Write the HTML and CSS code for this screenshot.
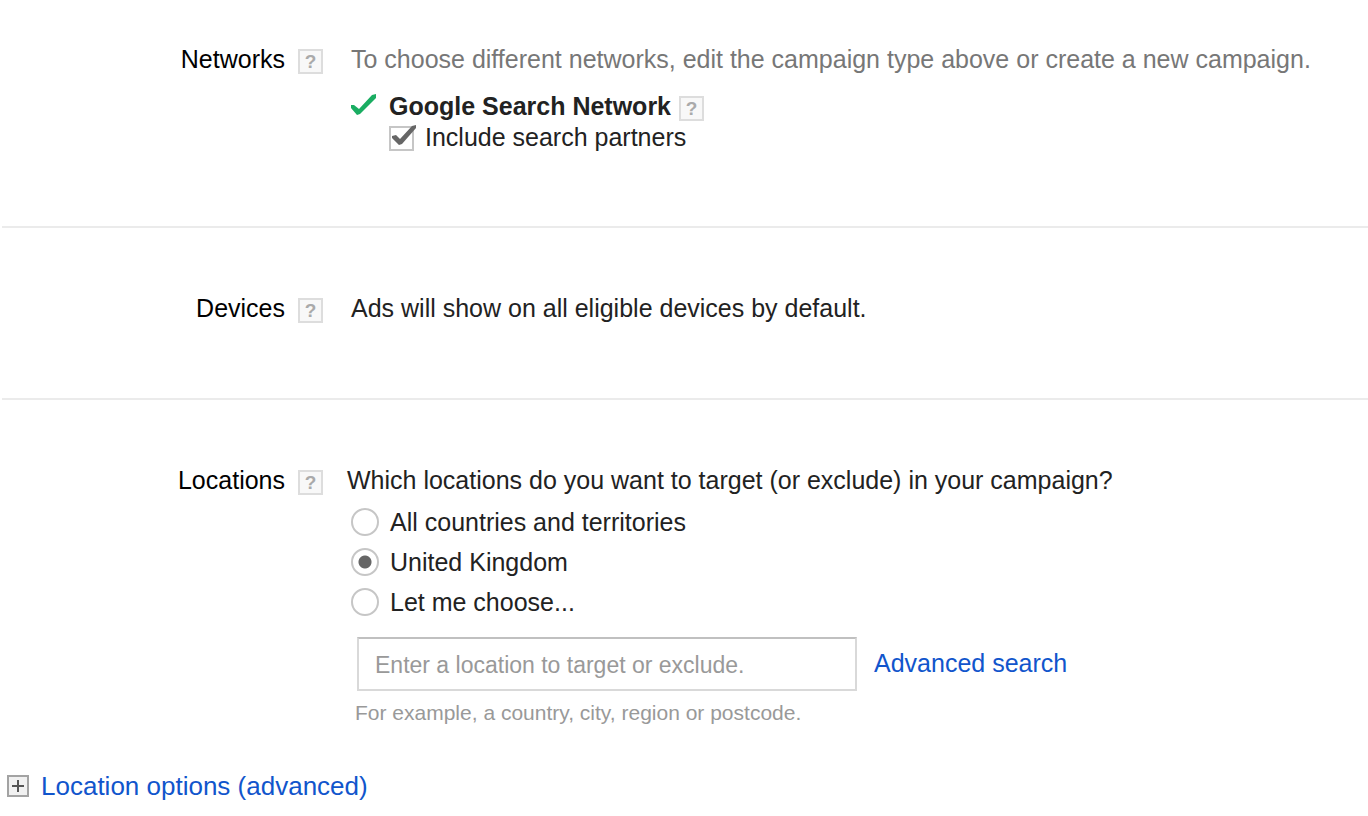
FILE: index.html
```html
<!DOCTYPE html>
<html lang="en">
<head>
  <meta charset="UTF-8" />
  <meta name="viewport" content="width=device-width, initial-scale=1.0" />
  <title>Campaign settings</title>
  <link rel="stylesheet" href="styles.css">
</head>
<body>
  <form class="settings">

    <section class="setting">
      <div class="setting-name">
        <h2>Networks</h2>
        <button type="button" class="help" aria-label="Help with networks">?</button>
      </div>
      <div class="setting-body">
        <p class="note">To choose different networks, edit the campaign type above or create a new campaign.</p>
        <div class="network">
          <svg class="tick" viewBox="0 0 26 22" aria-hidden="true">
            <path d="M0 14 L0 11 L3 11 L8 15 L21 1 L25 0 L25 4 L9 20 L6 21 Z" fill="#1aad62" />
          </svg>
          <strong>Google Search Network</strong>
          <button type="button" class="help" aria-label="Help with Google Search Network">?</button>
        </div>
        <div class="partners">
          <span class="check">
            <input type="checkbox" id="partners" checked>
            <svg viewBox="0 0 28 28" aria-hidden="true">
              <path d="M3 14 L3 12 L7 11 L11 15 L23 2 L27 1 L27 4 L13 20 L10 21 Z" fill="#666" />
            </svg>
          </span>
          <label for="partners">Include search partners</label>
        </div>
      </div>
    </section>

    <section class="setting">
      <div class="setting-name">
        <h2>Devices</h2>
        <button type="button" class="help" aria-label="Help with devices">?</button>
      </div>
      <div class="setting-body">
        <p>Ads will show on all eligible devices by default.</p>
      </div>
    </section>

    <section class="setting locations">
      <div class="setting-name">
        <h2>Locations</h2>
        <button type="button" class="help" aria-label="Help with locations">?</button>
      </div>
      <fieldset class="setting-body">
        <legend>Which locations do you want to target (or exclude) in your campaign?</legend>
        <div class="choices">
          <div class="choice">
            <input type="radio" name="location" id="all">
            <label for="all">All countries and territories</label>
          </div>
          <div class="choice">
            <input type="radio" name="location" id="uk" checked>
            <label for="uk">United Kingdom</label>
          </div>
          <div class="choice">
            <input type="radio" name="location" id="choose">
            <label for="choose">Let me choose...</label>
          </div>
        </div>
        <div class="search">
          <input type="text" aria-label="Location" aria-describedby="hint" placeholder="Enter a location to target or exclude.">
          <a href="#">Advanced search</a>
        </div>
        <p class="hint" id="hint">For example, a country, city, region or postcode.</p>
      </fieldset>
    </section>

    <a href="#" class="more">
      <svg viewBox="0 0 22 22" aria-hidden="true">
        <rect x="1" y="1" width="20" height="20" fill="#f1f1f1" stroke="#a3a3a3" stroke-width="2" />
        <path d="M11 5 V17 M5 11 H17" stroke="#555" stroke-width="2" />
      </svg>
      Location options (advanced)
    </a>

  </form>
</body>
</html>
```

FILE: styles.css
```css
* {
  box-sizing: border-box;
}

body {
  margin: 0;
  background-color: #fff;
  color: #222;
  font-family: "Liberation Sans", Arial, Helvetica, sans-serif;
  font-size: 25px;
  line-height: 30px;
}

h2, p {
  margin: 0;
  font-size: 25px;
  font-weight: normal;
}

a {
  color: #15c;
  text-decoration: none;
}

a:hover {
  text-decoration: underline;
}

.settings {
  padding-left: 2px;
}

.setting {
  display: grid;
  grid-template-columns: 321px 1fr;
  column-gap: 28px;
  padding: 65px 0 75px;
  border-bottom: 2px solid #ebebeb;
}

.setting:first-child {
  padding-top: 44px;
  padding-bottom: 74px;
}

.setting-name {
  display: flex;
  justify-content: flex-end;
  align-items: flex-start;
  gap: 13px;
}

.setting-name h2 {
  color: #000;
}

.help {
  width: 25px;
  height: 25px;
  margin-top: 5px;
  padding: 0;
  background-color: #f8f8f8;
  border: 2px solid #ddd;
  color: #aaa;
  font-family: inherit;
  font-size: 19px;
  font-weight: bold;
  line-height: 20px;
  cursor: pointer;
}

.note {
  color: #777;
}

/* networks */
.network {
  display: flex;
  align-items: flex-start;
  margin-top: 17px;
}

.network strong {
  margin: 0 8px 0 12px;
}

.tick {
  width: 26px;
  height: 22px;
  margin-top: 3px;
}

.partners {
  display: flex;
  margin-top: 1px;
  padding-left: 38px;
  gap: 11px;
}

.check {
  position: relative;
  width: 25px;
  height: 25px;
  margin-top: 4px;
}

.check input {
  display: block;
  width: 25px;
  height: 25px;
  margin: 0;
  appearance: none;
  background-color: #fff;
  border: 2px solid #c6c6c6;
}

.check svg {
  display: none;
  position: absolute;
  left: 0;
  top: -2px;
  width: 28px;
  height: 28px;
  pointer-events: none;
}

.check input:checked + svg {
  display: block;
}

/* locations */
.locations {
  padding-bottom: 43px;
  border-bottom: none;
  column-gap: 24px;
}

fieldset {
  margin: 0;
  padding: 0;
  border: none;
}

legend {
  padding: 0;
}

.choices {
  display: grid;
  gap: 10px;
  margin-top: 12px;
  padding-left: 4px;
}

.choice {
  display: flex;
  align-items: center;
  gap: 11px;
}

.choice input {
  width: 28px;
  height: 28px;
  margin: 0;
  appearance: none;
  background-color: #fff;
  border: 2px solid #c6c6c6;
  border-radius: 50%;
}

.choice input:checked {
  background-image: radial-gradient(circle, #666 6px, transparent 7px);
}

.search {
  display: flex;
  align-items: center;
  gap: 17px;
  margin-top: 20px;
  padding-left: 10px;
}

.search input {
  width: 500px;
  height: 54px;
  padding: 2px 16px 0;
  border: 2px solid #d9d9d9;
  border-top-color: #c0c0c0;
  font-family: inherit;
  font-size: 23px;
  color: #222;
}

.search input::placeholder {
  color: #999;
}

.search a {
  padding-bottom: 2px;
}

.hint {
  margin-top: 7px;
  padding-left: 8px;
  color: #999;
  font-size: 21px;
}

.more {
  display: inline-flex;
  align-items: center;
  gap: 12px;
  padding-left: 5px;
  font-size: 26px;
}

.more svg {
  width: 22px;
  height: 22px;
}
```
